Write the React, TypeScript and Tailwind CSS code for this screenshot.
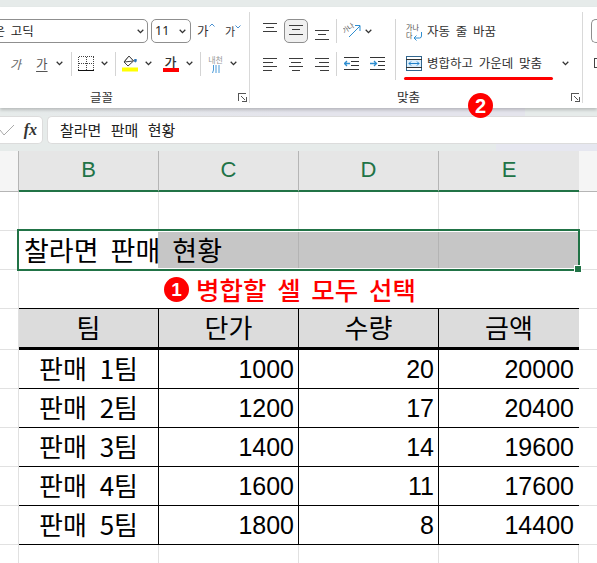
const cjk = "font-['Noto_Sans_CJK_KR','Noto_Sans',sans-serif]";

function Chev({ className = "" }: { className?: string }) {
  return (
    <svg width="7" height="5" viewBox="0 0 7 5" className={`shrink-0 ${className}`} fill="none" stroke="#333" strokeWidth="1.3">
      <path d="M0.7 0.8 L3.5 3.6 L6.3 0.8" />
    </svg>
  );
}

function Sep({ h = "h-6" }: { h?: string }) {
  return <div className={`w-px shrink-0 ${h} bg-[#d4d4d4]`} />;
}

function Lines({ rows, className = "" }: { rows: [number, number, number][]; className?: string }) {
  return (
    <svg width="15" height="24" viewBox="0 0 15 24" stroke="#3c3c3c" strokeWidth="1" shapeRendering="crispEdges" className={`shrink-0 ${className}`}>
      {rows.map((r, i) => (
        <line key={i} x1={r[0]} x2={r[1]} y1={r[2] + 0.5} y2={r[2] + 0.5} />
      ))}
    </svg>
  );
}

function Launcher() {
  return (
    <svg width="9" height="9" viewBox="0 0 9 9" fill="none" stroke="#555" strokeWidth="1" shapeRendering="crispEdges">
      <path d="M0.5 8 V0.5 H8" />
      <path d="M3 3 L7.5 7.5 M8.5 4 V8.5 H4" />
    </svg>
  );
}

function FontGroup() {
  return (
    <div className="flex h-[91px] w-[250px] shrink-0 flex-col border-r border-[#d9d9d9] pt-[7px]">
      <div className="flex h-6 items-center">
        <div className="ml-[-20px] flex h-6 w-[168px] shrink-0 items-center justify-between rounded-[5px] border border-[#8f8f8f] pl-[1px] pr-[3px] text-[12.5px] text-[#222] [word-spacing:3px]">
          <span className="whitespace-nowrap">맑은 고딕</span>
          <Chev />
        </div>
        <div className="ml-[3px] flex h-6 w-[40px] shrink-0 items-center justify-between rounded-[5px] border border-[#8f8f8f] pl-[3px] pr-[4px] text-[#222]">
          <span className="font-['Noto_Sans',sans-serif] text-[12.5px]">11</span>
          <Chev />
        </div>
        <div className="ml-[6px] flex w-[20px] shrink-0 items-start text-[12.5px] leading-none text-[#333]">
          <span>가</span>
          <svg width="6" height="4" viewBox="0 0 6 4" fill="none" stroke="#4a90d0" className="mt-[-2px]"><path d="M.5 3.5 3 1 5.5 3.5" /></svg>
        </div>
        <div className="ml-[8px] flex w-[20px] shrink-0 items-start text-[11px] leading-none text-[#333]">
          <span>가</span>
          <svg width="6" height="4" viewBox="0 0 6 4" fill="none" stroke="#4a90d0" className="mt-[-1px]"><path d="M.5 .5 3 3 5.5 .5" /></svg>
        </div>
      </div>
      <div className="mt-[8px] flex h-[25px] items-center">
        <span className="ml-[10px] text-[12px] italic text-[#666]">가</span>
        <span className="ml-[15px] text-[12.5px] leading-[15px] text-[#555] underline underline-offset-2">가</span>
        <Chev className="ml-[8px]" />
        <div className="ml-[8px]"><Sep /></div>
        <svg width="16" height="15" viewBox="0 0 16 15" className="ml-[6px]" fill="none" shapeRendering="crispEdges">
          <path d="M.5.5H15.5M.5 7.5H15.5M.5.5V14.5M15.5.5V14.5M8 .5V14.5" stroke="#444" strokeDasharray="1 1" />
          <path d="M0 14.5H16" stroke="#111" />
        </svg>
        <Chev className="ml-[7px]" />
        <div className="ml-[7px]"><Sep /></div>
        <svg width="16" height="17" viewBox="0 0 16 17" className="ml-[6px]" fill="none">
          <path d="M7 1 L2 7 L6 11 L11.5 6 Z" stroke="#444" />
          <path d="M7 1 L11.5 6 L2.2 7 Z" fill="#fff" stroke="#444" />
          <path d="M13 4 C11 8 15.5 8 14 4" fill="#2f74b5" stroke="#2f74b5" />
          <rect x="0" y="12.5" width="16" height="4" fill="#ffff00" />
        </svg>
        <Chev className="ml-[7px]" />
        <div className="ml-[11px] flex h-[17px] w-[16px] shrink-0 flex-col items-center justify-between">
          <span className="text-[13px] font-medium leading-[13px] text-[#333]">가</span>
          <span className="h-1 w-4 bg-[#ff0000]" />
        </div>
        <Chev className="ml-[7px]" />
        <div className="ml-[7px]"><Sep /></div>
        <div className="ml-[6px] flex w-[18px] shrink-0 flex-col items-center text-[8px] leading-[10px] text-[#999]">
          <span className="whitespace-nowrap">내천</span>
          <svg width="8" height="8" viewBox="0 0 8 8" stroke="#4a9ad8" fill="none"><path d="M1.5 0 V5 L0.5 8 M4 0 V8 M7 0 V8" /></svg>
        </div>
        <Chev className="ml-[5px]" />
      </div>
      <div className="mt-auto flex h-[12px] items-center">
        <span className="ml-[90px] text-[12.5px] text-[#333]">글꼴</span>
        <span className="ml-auto mr-[2px]"><Launcher /></span>
      </div>
    </div>
  );
}

function AlignGroup() {
  return (
    <div className="relative flex h-[91px] w-[333px] shrink-0 border-r border-[#d9d9d9] pt-[7px]">
      <div className="flex w-[86px] shrink-0 flex-col">
        <div className="flex h-6 items-center">
          <Lines className="ml-[13px]" rows={[[0, 14, 4], [3, 11, 8], [0, 14, 12]]} />
          <div className="ml-[6px] flex h-6 w-[24px] shrink-0 items-center justify-center rounded-[5px] border border-[#8f8f8f] bg-[#f0f0f0]">
            <Lines rows={[[0, 14, 6], [3, 11, 10], [0, 14, 15]]} />
          </div>
          <Lines className="ml-[7px]" rows={[[0, 14, 11], [3, 11, 15], [0, 14, 20]]} />
        </div>
        <div className="mt-[8px] flex h-[25px] items-center">
          <Lines className="ml-[13px]" rows={[[0, 14, 6], [0, 10, 10], [0, 14, 14], [0, 9, 18]]} />
          <Lines className="ml-[11px]" rows={[[0, 14, 6], [2, 12, 10], [0, 14, 14], [3, 11, 18]]} />
          <Lines className="ml-[11px]" rows={[[0, 14, 6], [4, 14, 10], [0, 14, 14], [5, 14, 18]]} />
        </div>
      </div>
      <div className="flex w-[59px] shrink-0 flex-col">
        <div className="flex h-6 items-center">
          <Sep />
          <svg width="18" height="18" viewBox="0 0 18 18" className="ml-[6px] shrink-0" fill="none">
            <path d="M6 15 L17 4 M12 3.5 H17 V9" stroke="#2f8ed0" />
            <text x="-1" y="9" fontSize="7" fill="#555" transform="rotate(-35 5 7)">가나</text>
          </svg>
          <Chev className="ml-[4px]" />
        </div>
        <div className="mt-[8px] flex h-[25px] items-center">
          <Sep />
          <svg width="15" height="14" viewBox="0 0 15 14" className="ml-[7px] shrink-0" fill="none" shapeRendering="crispEdges">
            <path d="M0 .5H15M7 4.5H15M7 8.5H15M0 12.5H15" stroke="#333" />
            <path d="M6 6.5H0.5M3 4 L0.5 6.5 L3 9" stroke="#2f8ed0" strokeWidth="1.3" shapeRendering="auto" />
          </svg>
          <svg width="15" height="14" viewBox="0 0 15 14" className="ml-[11px] shrink-0" fill="none" shapeRendering="crispEdges">
            <path d="M0 .5H15M8 4.5H15M8 8.5H15M0 12.5H15" stroke="#333" />
            <path d="M0 6.5H6.5M4 4 L6.5 6.5 L4 9" stroke="#2f8ed0" strokeWidth="1.3" shapeRendering="auto" />
          </svg>
        </div>
      </div>
      <div className="flex items-start">
        <Sep h="h-[61px]" />
        <div className="relative ml-[10px] flex w-[165px] shrink-0 flex-col">
          <div className="flex h-6 items-center">
            <div className="relative h-[17px] w-[16px] shrink-0 text-[7px] leading-[8px] text-[#444]">
              <div className="whitespace-nowrap">가나</div>
              <div>다</div>
              <svg width="10" height="9" viewBox="0 0 10 9" className="absolute bottom-[-1px] right-[-1px]" fill="none" stroke="#2f8ed0"><path d="M8.5 0 V4 Q8.5 6 6.5 6 H1 M3.5 3.5 L1 6 L3.5 8.5" /></svg>
            </div>
            <span className="ml-[5px] whitespace-nowrap text-[12.5px] text-[#333] [word-spacing:3px]">자동 줄 바꿈</span>
          </div>
          <div className="mt-[8px] flex h-[25px] items-center">
            <svg width="16" height="15" viewBox="0 0 16 15" fill="none" shapeRendering="crispEdges" className="shrink-0">
              <rect x="0" y="3" width="16" height="9" fill="#dbeefb" />
              <rect x=".5" y=".5" width="15" height="14" stroke="#33678f" />
              <path d="M0 3.5H16M0 11.5H16" stroke="#333" />
              <path d="M3 7.5H13M5 5.5 3 7.5 5 9.5M11 5.5 13 7.5 11 9.5" stroke="#2080c8" shapeRendering="auto" />
            </svg>
            <span className="ml-[5px] whitespace-nowrap text-[12.5px] text-[#333] [word-spacing:3px]">병합하고 가운데 맞춤</span>
            <Chev className="ml-auto mr-[2px]" />
          </div>
          <div className="absolute left-[-2px] top-[58px] h-[3px] w-[149px] rounded-full bg-[#ff0000]" />
        </div>
      </div>
      <div className="absolute bottom-0 left-0 right-0 flex h-[12px] items-center">
        <span className="ml-[147px] text-[12.5px] text-[#333]">맞춤</span>
        <span className="ml-auto mr-[2px]"><Launcher /></span>
      </div>
      <div className="absolute left-[218px] top-[81px] z-20 flex h-[25px] w-[25px] items-center justify-center rounded-full bg-[#ff0000] font-['Liberation_Sans',sans-serif] text-[20px] font-bold leading-none text-white">2</div>
    </div>
  );
}

function Ribbon() {
  return (
    <div className="relative z-10 flex h-[101px] overflow-visible bg-white pt-[5px] shadow-[0_2px_3px_rgba(0,0,0,0.2)]">
      <FontGroup />
      <AlignGroup />
      <div className="ml-[8px] flex flex-col pt-[7px]">
        <div className="h-6 w-[20px] rounded-l-[5px] border border-r-0 border-[#8f8f8f]" />
        <div className="ml-[3px] mt-[15px] h-[10px] w-[10px] border border-r-0 border-[#444]" />
      </div>
    </div>
  );
}

function FormulaBar() {
  return (
    <div className="flex h-[43px] items-start bg-[linear-gradient(90deg,#e6ebea_0%,#e4e4ec_50%,#e4e4ec_88%,#e6ebea_88%),linear-gradient(90deg,#e6ebea_83%,#e6e7f0_83%)] bg-[size:100%_8px,100%_100%] bg-no-repeat pt-[8px]">
      <div className="flex h-[28px] w-[43px] shrink-0 items-center justify-between rounded-r-[5px] border border-l-0 border-[#dcdcdc] bg-white pr-[5px]">
        <svg width="15" height="12" viewBox="0 0 15 12" fill="none" stroke="#aaa"><path d="M0 6 L4 11 L14 1" /></svg>
        <span className="font-['Liberation_Serif',serif] text-[16px] font-bold italic text-[#333]">fx</span>
      </div>
      <div className="ml-[4px] flex h-[28px] flex-1 items-center rounded-l-[5px] border border-r-0 border-[#dcdcdc] bg-white pl-[12px] text-[15px] text-[#222] [word-spacing:6px]">
        찰라면 판매 현황
      </div>
    </div>
  );
}

function ColHead({ children, last }: { children: string; last?: boolean }) {
  return (
    <div className={`flex w-[140px] items-center justify-center border-b-2 border-b-[#217346] bg-[#e6e6e6] pb-[3px] font-['Liberation_Sans',sans-serif] text-[22px] text-[#217346] ${last ? "" : "border-r border-r-[#b5b5b5]"}`}>
      {children}
    </div>
  );
}

const rows: [string, string, string, string][] = [
  ["판매 1팀", "1000", "20", "20000"],
  ["판매 2팀", "1200", "17", "20400"],
  ["판매 3팀", "1400", "14", "19600"],
  ["판매 4팀", "1600", "11", "17600"],
  ["판매 5팀", "1800", "8", "14400"],
];

const num = "flex items-center justify-end border-b border-black font-['Liberation_Sans',sans-serif] text-[25px] leading-none text-black";

function Row({ children, h = "h-[39px]" }: { children?: React.ReactNode; h?: string }) {
  return (
    <div className={`flex ${h}`}>
      <div className="w-[19px] shrink-0 border-b border-r border-[#e1e1e1]" />
      <div className="grid w-[560px] shrink-0 grid-cols-4">{children}</div>
      <div className="flex-1 border-b border-[#e1e1e1]" />
    </div>
  );
}

function Blank() {
  return <div className="border-b border-r border-[#e1e1e1]" />;
}

function Sheet() {
  return (
    <div className={`bg-white ${cjk}`}>
      <div className="flex h-[41px]">
        <div className="w-[19px] border-b border-r border-[#b5b5b5] bg-[#f5f5f5]" />
        <ColHead>B</ColHead>
        <ColHead>C</ColHead>
        <ColHead>D</ColHead>
        <ColHead last>E</ColHead>
        <div className="flex-1 border-b border-[#b5b5b5] bg-[#f5f5f5]" />
      </div>
      <Row><Blank /><Blank /><Blank /><Blank /></Row>

      <div className="flex h-[39px]">
        <div className="w-[19px] shrink-0 border-b border-r border-[#e1e1e1]" />
        <div className="relative z-[1] ml-[-2px] mt-[-2px] flex h-[42px] w-[563px] shrink-0 border-2 border-[#217346] bg-white">
          <div className="relative z-[2] flex w-[139px] shrink-0 items-center whitespace-nowrap pb-[1px] pl-[5px] text-[27px] leading-none text-black [word-spacing:6px]">찰라면 판매 현황</div>
          <div className="mb-[1px] mt-[1px] flex-1 bg-[#c6c6c6]">
            <div className="ml-[140px] h-full w-[141px] border-x border-[#b4b4b4]" />
          </div>
          <div className="absolute bottom-[-3px] right-[-3px] z-[3] h-[6px] w-[6px] bg-[#217346] outline outline-1 outline-white" />
        </div>
        <div className="flex-1 border-b border-[#e1e1e1]" />
      </div>

      <Row>
        <div className="col-span-4 flex items-center justify-center gap-[7px] border-b border-black pr-[18px] text-[25.5px] font-medium leading-none text-[#ff0000] [word-spacing:5px]">
          <span className="flex h-[25px] w-[25px] items-center justify-center rounded-full bg-[#ff0000] font-['Liberation_Sans',sans-serif] text-[19px] font-bold text-white">1</span>
          <span>병합할 셀 모두 선택</span>
        </div>
      </Row>

      <Row h="h-[41px]">
        {["팀", "단가", "수량", "금액"].map((t, i) => (
          <div key={t} className={`flex items-center justify-center border-b-[3px] border-b-black bg-[#dcdcdc] pb-[3px] text-[26px] leading-none text-black ${i < 3 ? "border-r border-r-black" : ""}`}>{t}</div>
        ))}
      </Row>

      {rows.map((r) => (
        <Row key={r[0]}>
          <div className="flex items-center justify-center border-b border-r border-black pb-[2px] text-[26px] leading-none text-black [word-spacing:7px]">{r[0]}</div>
          <div className={`${num} border-r pr-[4px]`}>{r[1]}</div>
          <div className={`${num} border-r pr-[4px]`}>{r[2]}</div>
          <div className={`${num} pr-[5px]`}>{r[3]}</div>
        </Row>
      ))}

      <Row h="h-[19px]"><Blank /><Blank /><Blank /><Blank /></Row>
    </div>
  );
}

export default function App() {
  return (
    <div className={`h-[563px] w-[597px] overflow-hidden bg-[#e6ebea] ${cjk}`}>
      <div className="h-[7px] bg-[#e6ebea]" />
      <Ribbon />
      <FormulaBar />
      <Sheet />
    </div>
  );
}
